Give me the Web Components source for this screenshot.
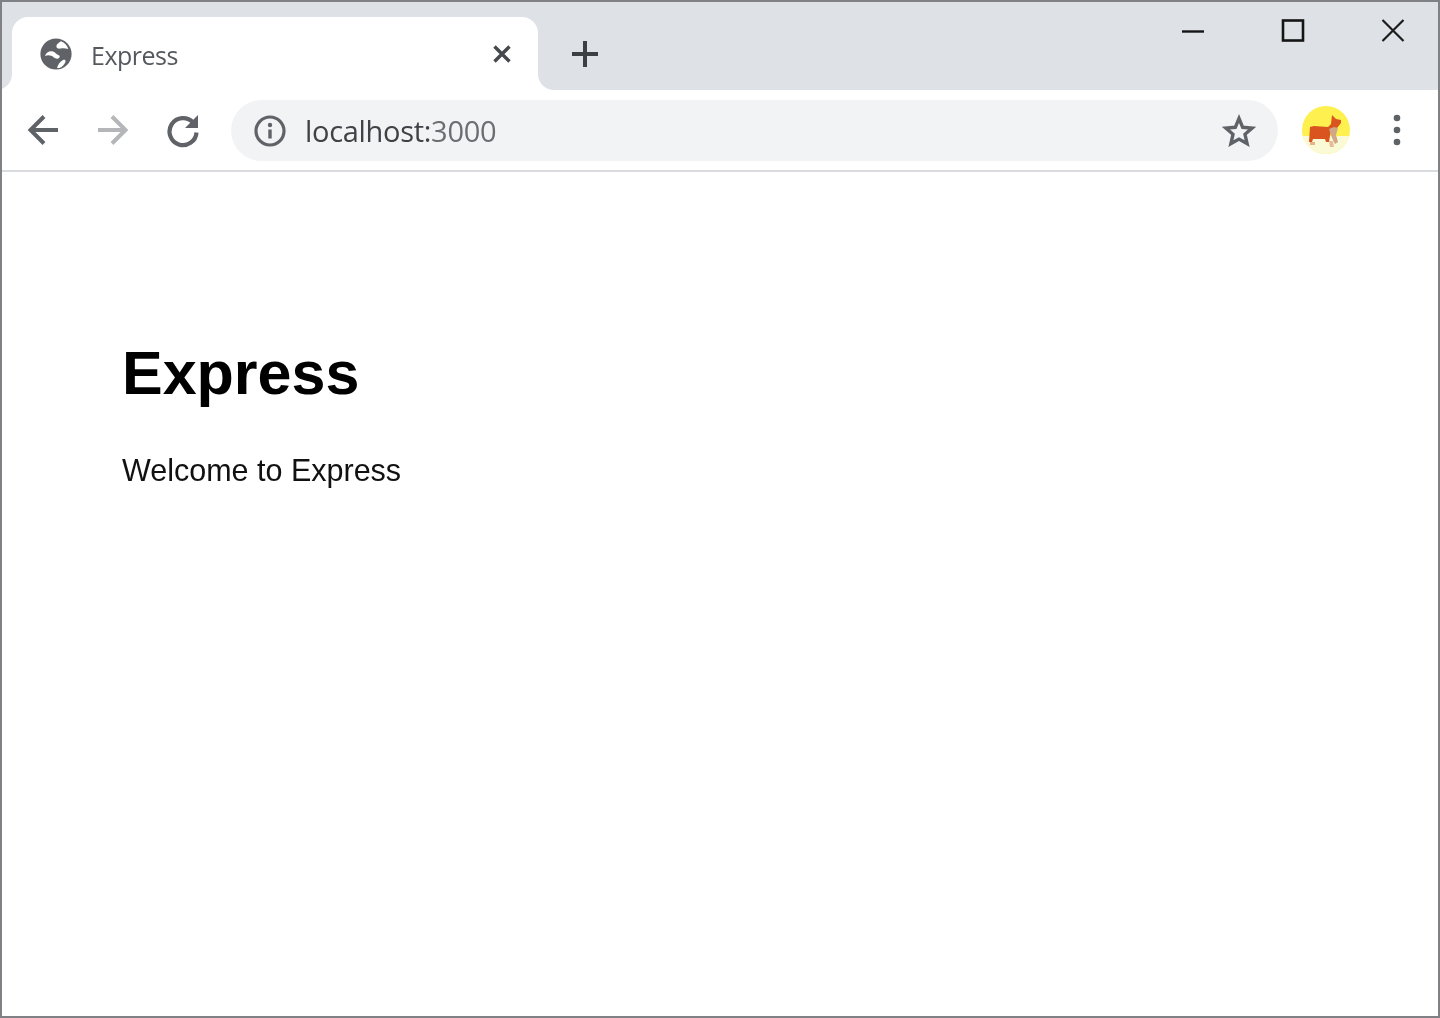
<!DOCTYPE html>
<html><head><meta charset="utf-8"><title>Express</title>
<style>html,body{margin:0;height:100%;background:#fff}</style></head>
<body>
<chrome-window>
  <tab-strip>
    <browser-tab>Express</browser-tab>
    <window-controls></window-controls>
  </tab-strip>
  <nav-toolbar>localhost:<span style="color:#6a6e73">3000</span></nav-toolbar>
  <express-page></express-page>
</chrome-window>
<script>
function def(name, html){
  customElements.define(name, class extends HTMLElement{
    constructor(){super();this.attachShadow({mode:'open'}).innerHTML=html;}
  });
}
def('chrome-window',`<style>
:host{display:flex;flex-direction:column;box-sizing:border-box;width:1440px;height:1018px;border:2px solid #7f8184;background:#fff;overflow:hidden;filter:blur(.45px)}
</style><slot></slot>`);
def('tab-strip',`<style>
:host{display:flex;flex:none;height:88px;background:#dee1e6;box-sizing:border-box;padding:15px 0 0 10px;position:relative}
</style><slot></slot>`);
def('browser-tab',`<style>
:host{display:flex;align-items:center;flex:none;position:relative;width:526px;height:73px;box-sizing:border-box;background:#fff;border-radius:16px 16px 0 0;padding:0 26px 0 28px;color:#5f6368;font:25px "Open Sans","Noto Sans",sans-serif}
:host::before,:host::after{content:"";position:absolute;bottom:0;width:16px;height:16px}
:host::before{left:-16px;background:radial-gradient(circle at 0 0,#dee1e6 15.5px,#fff 16.5px)}
:host::after{right:-16px;background:radial-gradient(circle at 100% 0,#dee1e6 15.5px,#fff 16.5px)}
.t{flex:1;margin:2px 0 0 19px;letter-spacing:-.5px;color:#55595e}
svg{display:block;flex:none}
.plus{position:absolute;left:559px;top:23px}
</style>
<svg width="32" height="32" viewBox="0 0 32 32"><circle cx="16" cy="16" r="15.600" fill="#5f6368"/><path d="M5 18c1-4 5-5.500 8-4.500 2.500.8 3 3 5.300 3.500 1.600.4 1.800 2 .7 3-1.500 1.300-4 .5-5.500-.8-2-1.700-5.200-2.500-8.500-1.200zM21 3.300c-2.500 1.500-5 3.500-4.500 5.700.4 1.700 2.500 1.800 4 1.500 2.500-.5 5-.5 7.800.5-1-3.500-3.800-6.500-7.300-7.700zM17 30c1-3.500 3-6.500 6-8 1.500-.7 2.800 0 2.500 1.500-.4 1.800-2 4-4 5.500-1.500 1-3 1-4.500 1z" fill="#fff"/></svg>
<span class="t"><slot></slot></span>
<svg width="20" height="20" viewBox="0 0 20 20"><path d="M2.500 2.500l15 15M17.500 2.500l-15 15" stroke="#45484c" stroke-width="3.400"/></svg>
<svg class="plus" width="28" height="28" viewBox="0 0 28 28"><path d="M14 1v26M1 14h26" stroke="#3c4043" stroke-width="4"/></svg>`);
def('window-controls',`<style>
:host{display:flex;gap:76px;margin-left:auto;padding:1px 33px 0 0;height:26px;flex:none}
svg{display:block}
</style>
<svg width="24" height="26" viewBox="0 0 24 26"><path d="M1 13.500h22" stroke="#151515" stroke-width="2.400"/></svg>
<svg width="24" height="26" viewBox="0 0 24 26"><rect x="2" y="2.500" width="20" height="20" fill="none" stroke="#151515" stroke-width="2.600"/></svg>
<svg width="24" height="26" viewBox="0 0 24 26"><path d="M1.500 2l21 21M22.500 2l-21 21" stroke="#1c1c1c" stroke-width="2.200"/></svg>`);
def('nav-toolbar',`<style>
:host{display:flex;align-items:center;flex:none;box-sizing:border-box;height:82px;padding:0 0 0 23px;background:#fff;border-bottom:2px solid #d9dbdf}
.nav{display:flex;gap:34px;margin-right:30px}
svg{display:block;flex:none}
.omni{display:flex;align-items:center;box-sizing:border-box;width:1047px;height:61px;margin-top:1px;border-radius:31px;background:#f1f3f4;padding:0 22px 0 22px;color:#3f4246;font:29px "Open Sans","Noto Sans",sans-serif}
.url{flex:1;margin-left:20px;letter-spacing:-.3px}
.avatar{margin-left:24px}
.menu{margin-left:43px}
</style>
<div class="nav">
<svg width="36" height="36" viewBox="0 0 36 36"><path d="M33 18H6M19 4.500L5.500 18 19 31.500" fill="none" stroke="#5f6368" stroke-width="4"/></svg>
<svg width="36" height="36" viewBox="0 0 36 36"><path d="M3 18h27M17 4.500L30.500 18 17 31.500" fill="none" stroke="#b4b6b9" stroke-width="4"/></svg>
<svg width="36" height="36" viewBox="0 0 36 36"><path d="M28 10.500A13.500 13.500 0 1 0 31.500 20.500" fill="none" stroke="#5f6368" stroke-width="4.200"/><path d="M33 3V16H20z" fill="#5f6368"/></svg>
</div>
<div class="omni">
<svg width="32" height="32" viewBox="0 0 32 32" style="margin-left:1px;margin-right:-1px"><circle cx="16" cy="16" r="14" fill="none" stroke="#5f6368" stroke-width="3.200"/><path d="M16 14.500v9" stroke="#5f6368" stroke-width="3.400"/><circle cx="16" cy="10" r="2.200" fill="#5f6368"/></svg>
<span class="url"><slot></slot></span>
<svg width="34" height="34" viewBox="0 0 34 34"><path d="M17 4.500l3.700 8.800 9.400.8-7.100 6.200 2.100 9.300L17 25.100l-8.100 4.500 2.100-9.300-7.100-6.200 9.400-.8z" fill="none" stroke="#5f6368" stroke-width="3.400"/></svg>
</div>
<svg class="avatar" width="48" height="48" viewBox="0 0 48 48"><defs><clipPath id="c"><circle cx="24" cy="24" r="24"/></clipPath></defs>
<g clip-path="url(#c)"><rect width="48" height="48" fill="#fdf04f"/><rect y="30" width="48" height="18" fill="#fafad6"/>
<path d="M8 21l4-1 14 1 3-3 1-9 4 4 5 1 0 3-4 5-6 2-2 12-3 0-1-3-12 0-1 3-3 0z" fill="#d9541e"/>
<path d="M27 23l5-2 4 1-2 7 2 7-3 2-3-6z" fill="#cfa888"/>
<path d="M27 35h4l1 6h-4z" fill="#e6bd98"/>
<path d="M8 36h5v3H8z" fill="#e6b48c"/></g></svg>
<svg class="menu" width="8" height="32" viewBox="0 0 8 32"><circle cx="4" cy="4" r="3.300" fill="#5f6368"/><circle cx="4" cy="16" r="3.300" fill="#5f6368"/><circle cx="4" cy="28" r="3.300" fill="#5f6368"/></svg>`);
def('express-page',`<style>
:host{display:block;flex:1;padding:166px 0 0 120px;background:#fff;color:#000;font-family:"Liberation Sans",Arial,sans-serif}
h1{margin:0;font-size:61px;line-height:70px;font-weight:700}
p{margin:44px 0 0;font-size:30.500px;line-height:36px;color:#111}
</style><h1>Express</h1><p>Welcome to Express</p>`);
</script>
</body></html>
